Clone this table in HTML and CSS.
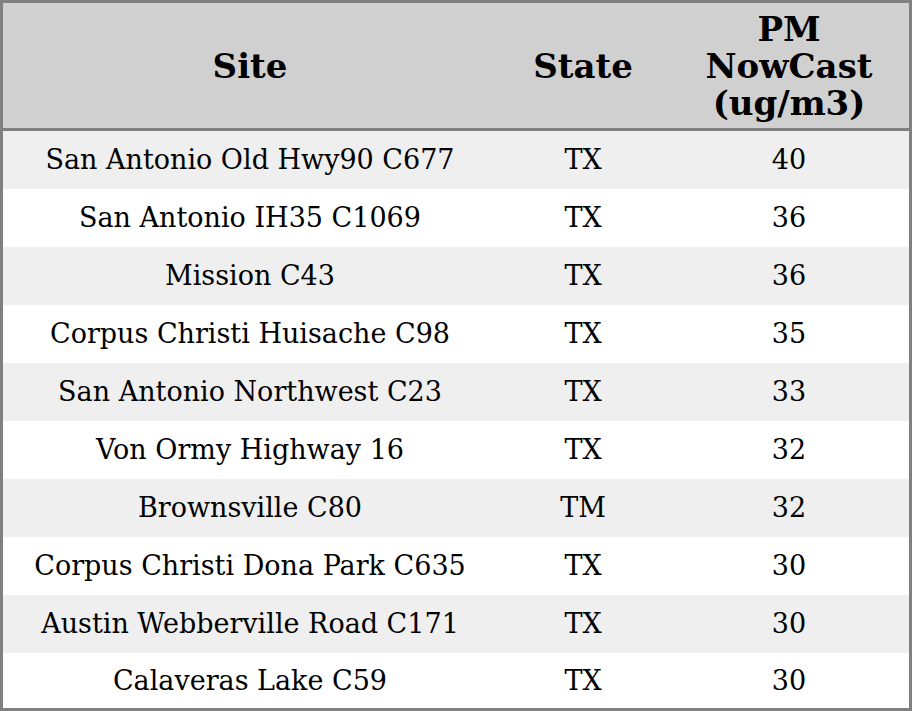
FILE: index.html
```html
<!DOCTYPE html>
<html>
<head>
<meta charset="utf-8">
<link rel="stylesheet" href="styles.css">
</head>
<body>
<table class="aq">
  <colgroup>
    <col class="c-site">
    <col class="c-state">
    <col class="c-pm">
  </colgroup>
  <thead>
    <tr><th>Site</th><th>State</th><th>PM<br>NowCast<br>(ug/m3)</th></tr>
  </thead>
  <tbody>
    <tr><td>San Antonio Old Hwy90 C677</td><td>TX</td><td>40</td></tr>
    <tr><td>San Antonio IH35 C1069</td><td>TX</td><td>36</td></tr>
    <tr><td>Mission C43</td><td>TX</td><td>36</td></tr>
    <tr><td>Corpus Christi Huisache C98</td><td>TX</td><td>35</td></tr>
    <tr><td>San Antonio Northwest C23</td><td>TX</td><td>33</td></tr>
    <tr><td>Von Ormy Highway 16</td><td>TX</td><td>32</td></tr>
    <tr><td>Brownsville C80</td><td>TM</td><td>32</td></tr>
    <tr><td>Corpus Christi Dona Park C635</td><td>TX</td><td>30</td></tr>
    <tr><td>Austin Webberville Road C171</td><td>TX</td><td>30</td></tr>
    <tr><td>Calaveras Lake C59</td><td>TX</td><td>30</td></tr>
  </tbody>
</table>
</body>
</html>
```
FILE: styles.css
```css
html, body {
  margin: 0;
  padding: 0;
  background: #fff;
}
.aq {
  box-sizing: border-box;
  width: 912px;
  border-collapse: separate;
  border-spacing: 0;
  border: 3px solid #808080;
  font-family: "DejaVu Serif", serif;
  color: #000;
  table-layout: fixed;
}
.c-site { width: 494px; }
.c-state { width: 172px; }
.c-pm { width: 240px; }
.aq th {
  box-sizing: border-box;
  background: #d0d0d0;
  font-size: 34px;
  font-weight: bold;
  line-height: 37px;
  height: 128px;
  padding: 2px 0 0;
  text-align: center;
  vertical-align: middle;
  border-bottom: 3px solid #808080;
}
.aq td {
  box-sizing: border-box;
  font-size: 27px;
  line-height: 30px;
  height: 58px;
  padding: 0;
  text-align: center;
  vertical-align: middle;
}
.aq tbody tr:last-child td { height: 55px; }
.aq tbody tr:nth-child(odd) td { background: #efefef; }
.aq tbody tr:nth-child(even) td { background: #fff; }
```
